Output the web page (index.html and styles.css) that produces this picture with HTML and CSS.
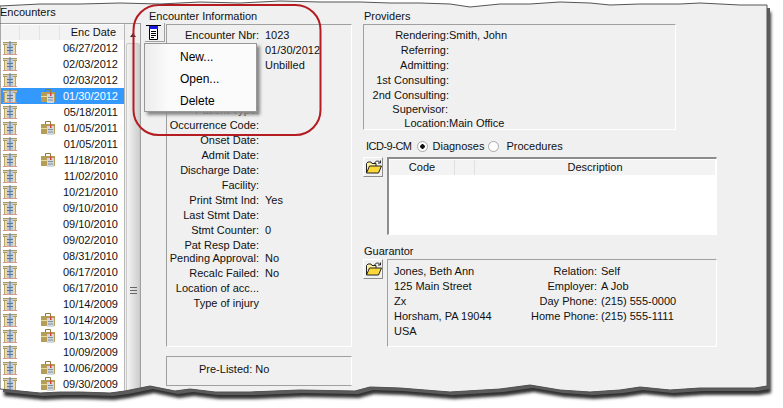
FILE: index.html
```html
<!DOCTYPE html>
<html>
<head>
<meta charset="utf-8">
<title>Encounters</title>
<link rel="stylesheet" href="styles.css">
</head>
<body>
<svg class="defs" width="0" height="0">
  <defs>
    <symbol id="enc" viewBox="0 0 14 14">
      <path d="M0 1h14v3H0z" fill="#a8986a"/>
      <path d="M0 2h14v1H0z" fill="#e2d6a8"/>
      <path d="M1 4h12v9H1z" fill="#ecd9a4"/>
      <path d="M1 4h1v9H1zM12 4h1v9h-1z" fill="#b8a670"/>
      <path d="M4 2h6v11H4z" fill="#b9c8dc"/>
      <path d="M6.500 0h1v13h-1zM4 6h6v1H4zM4 9h6v1H4z" fill="#5f78a0"/>
      <path d="M0 13h14v1H0z" fill="#d89a88"/>
    </symbol>
    <symbol id="brief" viewBox="0 0 14 14">
      <path d="M4.500 3V.5h5V3" fill="none" stroke="#8d7a3c"/>
      <path d="M0 3h14v10H0z" fill="#b59d57"/>
      <path d="M0 7h7v1H0z" fill="#ead99e"/>
      <path d="M6 5h7v9H6z" fill="#d3d8de"/>
      <path d="M9 3.500h1.500V7H9z" fill="#d8403a"/>
      <path d="M7 8h5v1H7zM7 10.500h5v1H7z" fill="#7d8da3"/>
    </symbol>
    <symbol id="folder" viewBox="0 0 16 14">
      <path d="M.5 13V3.500L2 2h3l1 1.500h4V6" fill="#fff0a0" stroke="#222"/>
      <path d="M.5 13l3-7h12l-3 7z" fill="#fbd83a" stroke="#222"/>
      <path d="M8.500 3C10 .5 13 .5 14 2.500M14.500 .5v2.500H12" fill="none" stroke="#222"/>
    </symbol>
  </defs>
</svg>
<div class="window">
  <section class="enc-pane">
    <h2 class="pane-title">Encounters</h2>
    <div class="enc-body">
      <div class="enc-list">
        <div class="enc-head"><span></span><span></span><span></span><span class="date">Enc Date</span></div>
        <div class="row"><span class="c"><svg class="ico"><use href="#enc"/></svg></span><span></span><span class="c"></span><span class="date">06/27/2012</span></div>
        <div class="row"><span class="c"><svg class="ico"><use href="#enc"/></svg></span><span></span><span class="c"></span><span class="date">02/03/2012</span></div>
        <div class="row"><span class="c"><svg class="ico"><use href="#enc"/></svg></span><span></span><span class="c"></span><span class="date">02/03/2012</span></div>
        <div class="row sel"><span class="c"><svg class="ico"><use href="#enc"/></svg></span><span></span><span class="c"><svg class="ico"><use href="#brief"/></svg></span><span class="date">01/30/2012</span></div>
        <div class="row"><span class="c"><svg class="ico"><use href="#enc"/></svg></span><span></span><span class="c"></span><span class="date">05/18/2011</span></div>
        <div class="row"><span class="c"><svg class="ico"><use href="#enc"/></svg></span><span></span><span class="c"><svg class="ico"><use href="#brief"/></svg></span><span class="date">01/05/2011</span></div>
        <div class="row"><span class="c"><svg class="ico"><use href="#enc"/></svg></span><span></span><span class="c"></span><span class="date">01/05/2011</span></div>
        <div class="row"><span class="c"><svg class="ico"><use href="#enc"/></svg></span><span></span><span class="c"><svg class="ico"><use href="#brief"/></svg></span><span class="date">11/18/2010</span></div>
        <div class="row"><span class="c"><svg class="ico"><use href="#enc"/></svg></span><span></span><span class="c"></span><span class="date">11/02/2010</span></div>
        <div class="row"><span class="c"><svg class="ico"><use href="#enc"/></svg></span><span></span><span class="c"></span><span class="date">10/21/2010</span></div>
        <div class="row"><span class="c"><svg class="ico"><use href="#enc"/></svg></span><span></span><span class="c"></span><span class="date">09/10/2010</span></div>
        <div class="row"><span class="c"><svg class="ico"><use href="#enc"/></svg></span><span></span><span class="c"></span><span class="date">09/10/2010</span></div>
        <div class="row"><span class="c"><svg class="ico"><use href="#enc"/></svg></span><span></span><span class="c"></span><span class="date">09/02/2010</span></div>
        <div class="row"><span class="c"><svg class="ico"><use href="#enc"/></svg></span><span></span><span class="c"></span><span class="date">08/31/2010</span></div>
        <div class="row"><span class="c"><svg class="ico"><use href="#enc"/></svg></span><span></span><span class="c"></span><span class="date">06/17/2010</span></div>
        <div class="row"><span class="c"><svg class="ico"><use href="#enc"/></svg></span><span></span><span class="c"></span><span class="date">06/17/2010</span></div>
        <div class="row"><span class="c"><svg class="ico"><use href="#enc"/></svg></span><span></span><span class="c"></span><span class="date">10/14/2009</span></div>
        <div class="row"><span class="c"><svg class="ico"><use href="#enc"/></svg></span><span></span><span class="c"><svg class="ico"><use href="#brief"/></svg></span><span class="date">10/14/2009</span></div>
        <div class="row"><span class="c"><svg class="ico"><use href="#enc"/></svg></span><span></span><span class="c"><svg class="ico"><use href="#brief"/></svg></span><span class="date">10/13/2009</span></div>
        <div class="row"><span class="c"><svg class="ico"><use href="#enc"/></svg></span><span></span><span class="c"></span><span class="date">10/09/2009</span></div>
        <div class="row"><span class="c"><svg class="ico"><use href="#enc"/></svg></span><span></span><span class="c"><svg class="ico"><use href="#brief"/></svg></span><span class="date">10/06/2009</span></div>
        <div class="row"><span class="c"><svg class="ico"><use href="#enc"/></svg></span><span></span><span class="c"><svg class="ico"><use href="#brief"/></svg></span><span class="date">09/30/2009</span></div>
      </div>
      <div class="scroll">
        <div class="arrow"></div>
        <div class="thumb"><span class="grip"></span></div>
      </div>
    </div>
  </section>

  <section class="info-pane">
    <h2 class="group-title info-title">Encounter Information</h2>
    <div class="info-top">
      <button class="tool"><svg width="15" height="15" viewBox="0 0 15 15"><path d="M0 .5h15" stroke="#000"/><path d="M3 1h9v3H3z" fill="#1818e0"/><path d="M3.500 4v10.500h8V4" fill="#fff" stroke="#000"/><path d="M5 6.500h5M5 8.500h5M5 10.500h5M5 12.500h3" stroke="#000"/></svg></button>
      <div class="info-box">
        <div class="f"><span class="l">Encounter Nbr:</span><span class="v">1023</span></div>
        <div class="f"><span class="l"></span><span class="v">01/30/2012</span></div>
        <div class="f"><span class="l"></span><span class="v">Unbilled</span></div>
        <div class="f"></div>
        <div class="f"></div>
        <div class="f"><span class="l">Patient Type:</span></div>
        <div class="f"><span class="l">Occurrence Code:</span></div>
        <div class="f"><span class="l">Onset Date:</span></div>
        <div class="f"><span class="l">Admit Date:</span></div>
        <div class="f"><span class="l">Discharge Date:</span></div>
        <div class="f"><span class="l">Facility:</span></div>
        <div class="f"><span class="l">Print Stmt Ind:</span><span class="v">Yes</span></div>
        <div class="f"><span class="l">Last Stmt Date:</span></div>
        <div class="f"><span class="l">Stmt Counter:</span><span class="v">0</span></div>
        <div class="f"><span class="l">Pat Resp Date:</span></div>
        <div class="f pending"><span class="l">Pending Approval:</span><span class="v">No</span></div>
        <div class="f"><span class="l">Recalc Failed:</span><span class="v">No</span></div>
        <div class="f"><span class="l">Location of acc...</span></div>
        <div class="f"><span class="l">Type of injury</span></div>
      </div>
    </div>
    <div class="pre-box"><span class="l">Pre-Listed:</span><span class="v">No</span></div>
    <div class="menu">
      <div class="mi">New...</div>
      <div class="mi">Open...</div>
      <div class="mi">Delete</div>
    </div>
  </section>

  <section class="right-pane">
    <h2 class="group-title plain">Providers</h2>
    <div class="prov-box">
      <div class="p"><span class="pl">Rendering:</span><span>Smith, John</span></div>
      <div class="p"><span class="pl">Referring:</span></div>
      <div class="p"><span class="pl">Admitting:</span></div>
      <div class="p"><span class="pl">1st Consulting:</span></div>
      <div class="p short"><span class="pl">2nd Consulting:</span></div>
      <div class="p short"><span class="pl sup">Supervisor:</span></div>
      <div class="p"><span class="pl">Location:</span><span>Main Office</span></div>
    </div>
    <div class="icd-line">
      <span class="icd-name">ICD-9-CM</span>
      <span class="radio on"></span><span>Diagnoses</span>
      <span class="radio second"></span><span>Procedures</span>
    </div>
    <div class="with-btn">
      <button class="open"><svg width="16" height="14"><use href="#folder"/></svg></button>
      <div class="code-box">
        <div class="code-head"><span class="ch1">Code</span><span class="ch2"></span><span class="ch3">Description</span></div>
      </div>
    </div>
    <h2 class="group-title guar plain">Guarantor</h2>
    <div class="with-btn tight">
      <button class="open"><svg width="16" height="14"><use href="#folder"/></svg></button>
      <div class="guar-box">
        <div class="addr"><div>Jones, Beth Ann</div><div>125 Main Street</div><div>Zx</div><div>Horsham, PA 19044</div><div>USA</div></div>
        <div class="gd">
          <span class="gl">Relation:</span><span>Self</span>
          <span class="gl">Employer:</span><span>A Job</span>
          <span class="gl">Day Phone:</span><span>(215) 555-0000</span>
          <span class="gl">Home Phone:</span><span>(215) 555-1111</span>
        </div>
      </div>
    </div>
  </section>

  <svg class="callout" width="783" height="408" viewBox="0 0 783 408">
    <rect x="133.500" y="5" width="187" height="130" rx="25" fill="none" stroke="#b41c22" stroke-width="2"/>
  </svg>

  <svg class="torn" width="783" height="408" viewBox="0 0 783 408">
    <defs>
      <filter id="blur" x="-5%" y="-5%" width="110%" height="110%"><feGaussianBlur stdDeviation="1.800"/></filter>
      <path id="edge" d="M0 6L40 4L80 4L120 3L160 4L200 2L240 3L280 1L320 2L360 2L390 3L420 3L450 4L470 7L500 4L530 4L560 2L590 3L610 5L640 4L680 4L700 3L740 5L767 5V386L755 388L700 388L670 390L640 387L620 390L590 392L560 390L530 385L500 389L450 392L400 388L370 387L355 391L300 390L250 392L215 392L190 389L175 391L150 386L125 391L110 393L80 392L60 392L40 393L20 391L0 389Z"/>
      <clipPath id="outside"><path clip-rule="evenodd" d="M0 0H783V408H0ZM0 6L40 4L80 4L120 3L160 4L200 2L240 3L280 1L320 2L360 2L390 3L420 3L450 4L470 7L500 4L530 4L560 2L590 3L610 5L640 4L680 4L700 3L740 5L767 5V386L755 388L700 388L670 390L640 387L620 390L590 392L560 390L530 385L500 389L450 392L400 388L370 387L355 391L300 390L250 392L215 392L190 389L175 391L150 386L125 391L110 393L80 392L60 392L40 393L20 391L0 389Z"/></clipPath>
    </defs>
    <g clip-path="url(#outside)">
      <rect width="783" height="408" fill="#fff"/>
      <use href="#edge" transform="translate(4 7)" fill="#333" filter="url(#blur)"/>
      <use href="#edge" transform="translate(3 3)" fill="#5c5c5c"/>
    </g>
    <use href="#edge" fill="none" stroke="#555" stroke-width="1"/>
  </svg>
</div>
</body>
</html>
```

FILE: styles.css
```css
* { box-sizing: border-box; }
html, body { margin: 0; padding: 0; background: #fff; }
body { font: 11px/15px "Liberation Sans", Arial, sans-serif; color: #111; }
.defs { position: absolute; }
.window {
  position: relative;
  width: 783px;
  height: 408px;
  overflow: hidden;
  background: #f0f0f0;
  display: flex;
  padding-top: 8px;
}
h2 { margin: 0; font: inherit; }

/* Encounters list */
.enc-pane { width: 141px; flex: none; }
.pane-title { height: 15px; line-height: 8px; }
.enc-body { display: flex; height: 385px; border-top: 1px solid #a0a0a0; background: #fff; border-right: 1px solid #a0a0a0; }
.enc-list { width: 125px; flex: none; padding-left: 1px; border-right: 1px solid #b8b8b8; }
.enc-head { display: grid; grid-template-columns: 19px 20px 20px 1fr; height: 15px; background: #f3f3f3; margin-top: 1px; }
.enc-head span { border-right: 1px solid #e4e4e4; }
.enc-head .date { border: 0; text-align: right; padding-right: 8px; }
.row { display: grid; grid-template-columns: 19px 20px 20px 1fr; height: 16px; line-height: 16px; align-items: center; }
.row .date { text-align: right; padding-right: 6px; }
.row.sel { background: #3399ff; color: #fff; }
.c { display: flex; padding-left: 2px; height: 16px; align-items: center; }
.row .c:nth-child(3) { padding-left: 1px; }
.ico { width: 14px; height: 14px; }
.scroll { flex: 1; display: flex; flex-direction: column; background: #f0f0f0; }
.arrow { height: 10px; margin-top: 6px; display: flex; justify-content: center; align-items: center; }
.arrow::before { content: ""; border: 3px solid transparent; border-top: 0; border-bottom: 4px solid #333; }
.thumb { flex: 1; margin: 3px 0 0 1px; border: 1px solid #c8c8c8; background: linear-gradient(90deg, #f4f4f4, #cfcfcf); border-radius: 2px; display: flex; justify-content: center; align-items: center; padding-top: 130px; }
.grip { width: 7px; height: 7px; background: repeating-linear-gradient(180deg, #666 0 1px, transparent 1px 3px); }

/* Encounter information */
.info-pane { width: 211px; flex: none; padding-left: 4px; position: relative; }
.group-title { height: 16px; line-height: 16px; }
.info-title { padding-left: 4px; }
.info-top { display: flex; gap: 1px; height: 323px; }
.tool { width: 20px; height: 19px; margin: -1px 0 0; padding: 1px 0 0 1px; border: 0; border-right: 1px solid #a0a0a0; border-bottom: 1px solid #a0a0a0; background: #f0f0f0; display: block; flex: none; }
.tool svg { display: block; }
.info-box { flex: 1; border: 1px solid #a0a0a0; border-right-color: #fff; border-bottom-color: #fff; padding-top: 3px; }
.f { display: flex; height: 15px; gap: 6px; white-space: nowrap; }
.pending { margin-top: -2px; }
.l { width: 92px; flex: none; text-align: right; }
.v { display: block; }
.pre-box { margin: 9px 0 0 21px; height: 30px; border: 1px solid #a0a0a0; border-right-color: #fff; display: flex; gap: 3px; padding-top: 5px; padding-left: 32px; }
.pre-box .l { width: auto; }
.menu {
  position: absolute;
  left: 3px;
  top: 35px;
  width: 113px;
  height: 69px;
  background: linear-gradient(90deg, #ececec, #fbfbfb 24px, #fbfbfb);
  border: 1px solid #979797;
  box-shadow: 3px 3px 3px #888;
  padding: 2px 0 0 35px;
  font-size: 12px;
}
.mi { height: 22px; line-height: 22px; color: #000; }

/* Right side */
.right-pane { flex: 1; padding-left: 11px; }
.plain { padding-left: 1px; }
.prov-box { width: 313px; height: 106px; border: 1px solid #a0a0a0; border-right-color: #fff; border-bottom-color: #fff; padding-top: 3px; }
.p { display: flex; height: 15px; white-space: nowrap; }
.p.short { height: 14px; }
.pl { width: 85px; flex: none; text-align: right; }
.sup { width: 84px; }
.icd-line { display: flex; align-items: center; gap: 3px; height: 15px; margin-top: 9px; padding-left: 3px; white-space: nowrap; }
.icd-name { letter-spacing: -0.5px; }
.radio { width: 11px; height: 11px; border-radius: 50%; border: 1px solid #a8a8a8; background: #fff; margin: 0 2px; display: block; }
.radio.on { background: radial-gradient(circle, #111 0 2px, #fff 2.500px); }
.radio.second { margin: 0 4px 0 1px; }
.with-btn { display: flex; gap: 4px; align-items: flex-start; margin-top: 3px; }
.with-btn.tight { margin-top: 0; }
.open { width: 20px; height: 20px; padding: 2px; margin: 0; border: 1px solid; border-color: #fff #8c8c8c #8c8c8c #fff; background: #f0f0f0; flex: none; display: block; }
.open svg { display: block; }
.code-box { width: 330px; height: 78px; border: 2px solid #8c8c8c; border-right: 1px solid #fff; border-bottom: 1px solid #fff; background: #fff; padding: 1px 1px 0 1px; }
.code-head { display: flex; height: 15px; background: #f3f3f3; text-align: center; }
.ch1 { width: 65px; border-right: 1px solid #e0e0e0; }
.ch2 { width: 20px; border-right: 1px solid #e0e0e0; }
.ch3 { flex: 1; }
.guar { margin-top: 8px; }
.guar-box { width: 330px; height: 88px; border: 1px solid #a0a0a0; border-right-color: #fff; border-bottom-color: #fff; display: flex; padding: 4px 0 0 6px; }
.addr { width: 137px; flex: none; }
.gd { display: grid; grid-template-columns: 66px auto; column-gap: 4px; grid-auto-rows: 15px; align-content: start; }
.gl { text-align: right; white-space: nowrap; }

/* Overlays */
.callout, .torn { position: absolute; left: 0; top: 0; pointer-events: none; }
```
